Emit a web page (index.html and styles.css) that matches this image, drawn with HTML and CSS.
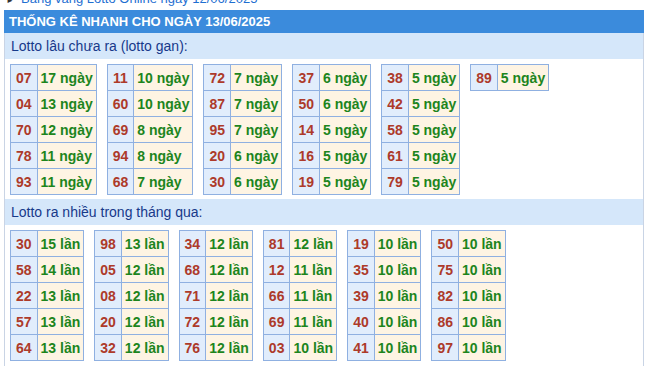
FILE: index.html
```html
<!DOCTYPE html>
<html lang="vi">
<head>
<meta charset="utf-8">
<title>Thống kê nhanh</title>
<link rel="stylesheet" href="styles.css">
</head>
<body>
<div class="crumb"><span class="arrow">&#9658;</span><a class="crumb-link" href="#">Bảng vàng Lotto Online ngày 12/06/2025</a></div>
<div class="box">
  <div class="box-head">THỐNG KÊ NHANH CHO NGÀY 13/06/2025</div>
  <div class="sub">Lotto lâu chưa ra (lotto gan):</div>
  <div class="grid grid-top">
    <table class="lt">
      <tr><td class="num">07</td><td class="val">17 ngày</td></tr>
      <tr><td class="num">04</td><td class="val">13 ngày</td></tr>
      <tr><td class="num">70</td><td class="val">12 ngày</td></tr>
      <tr><td class="num">78</td><td class="val">11 ngày</td></tr>
      <tr><td class="num">93</td><td class="val">11 ngày</td></tr>
    </table>
    <table class="lt">
      <tr><td class="num">11</td><td class="val">10 ngày</td></tr>
      <tr><td class="num">60</td><td class="val">10 ngày</td></tr>
      <tr><td class="num">69</td><td class="val">8 ngày</td></tr>
      <tr><td class="num">94</td><td class="val">8 ngày</td></tr>
      <tr><td class="num">68</td><td class="val">7 ngày</td></tr>
    </table>
    <table class="lt">
      <tr><td class="num">72</td><td class="val">7 ngày</td></tr>
      <tr><td class="num">87</td><td class="val">7 ngày</td></tr>
      <tr><td class="num">95</td><td class="val">7 ngày</td></tr>
      <tr><td class="num">20</td><td class="val">6 ngày</td></tr>
      <tr><td class="num">30</td><td class="val">6 ngày</td></tr>
    </table>
    <table class="lt">
      <tr><td class="num">37</td><td class="val">6 ngày</td></tr>
      <tr><td class="num">50</td><td class="val">6 ngày</td></tr>
      <tr><td class="num">14</td><td class="val">5 ngày</td></tr>
      <tr><td class="num">16</td><td class="val">5 ngày</td></tr>
      <tr><td class="num">19</td><td class="val">5 ngày</td></tr>
    </table>
    <table class="lt">
      <tr><td class="num">38</td><td class="val">5 ngày</td></tr>
      <tr><td class="num">42</td><td class="val">5 ngày</td></tr>
      <tr><td class="num">58</td><td class="val">5 ngày</td></tr>
      <tr><td class="num">61</td><td class="val">5 ngày</td></tr>
      <tr><td class="num">79</td><td class="val">5 ngày</td></tr>
    </table>
    <table class="lt">
      <tr><td class="num">89</td><td class="val">5 ngày</td></tr>
    </table>
  </div>
  <div class="sub">Lotto ra nhiều trong tháng qua:</div>
  <div class="grid grid-bottom">
    <table class="lt">
      <tr><td class="num">30</td><td class="val">15 lần</td></tr>
      <tr><td class="num">58</td><td class="val">14 lần</td></tr>
      <tr><td class="num">22</td><td class="val">13 lần</td></tr>
      <tr><td class="num">57</td><td class="val">13 lần</td></tr>
      <tr><td class="num">64</td><td class="val">13 lần</td></tr>
    </table>
    <table class="lt">
      <tr><td class="num">98</td><td class="val">13 lần</td></tr>
      <tr><td class="num">05</td><td class="val">12 lần</td></tr>
      <tr><td class="num">08</td><td class="val">12 lần</td></tr>
      <tr><td class="num">20</td><td class="val">12 lần</td></tr>
      <tr><td class="num">32</td><td class="val">12 lần</td></tr>
    </table>
    <table class="lt">
      <tr><td class="num">34</td><td class="val">12 lần</td></tr>
      <tr><td class="num">68</td><td class="val">12 lần</td></tr>
      <tr><td class="num">71</td><td class="val">12 lần</td></tr>
      <tr><td class="num">72</td><td class="val">12 lần</td></tr>
      <tr><td class="num">76</td><td class="val">12 lần</td></tr>
    </table>
    <table class="lt">
      <tr><td class="num">81</td><td class="val">12 lần</td></tr>
      <tr><td class="num">12</td><td class="val">11 lần</td></tr>
      <tr><td class="num">66</td><td class="val">11 lần</td></tr>
      <tr><td class="num">69</td><td class="val">11 lần</td></tr>
      <tr><td class="num">03</td><td class="val">10 lần</td></tr>
    </table>
    <table class="lt">
      <tr><td class="num">19</td><td class="val">10 lần</td></tr>
      <tr><td class="num">35</td><td class="val">10 lần</td></tr>
      <tr><td class="num">39</td><td class="val">10 lần</td></tr>
      <tr><td class="num">40</td><td class="val">10 lần</td></tr>
      <tr><td class="num">41</td><td class="val">10 lần</td></tr>
    </table>
    <table class="lt">
      <tr><td class="num">50</td><td class="val">10 lần</td></tr>
      <tr><td class="num">75</td><td class="val">10 lần</td></tr>
      <tr><td class="num">82</td><td class="val">10 lần</td></tr>
      <tr><td class="num">86</td><td class="val">10 lần</td></tr>
      <tr><td class="num">97</td><td class="val">10 lần</td></tr>
    </table>
  </div>
</div>
</body>
</html>
```

FILE: styles.css
```css
html, body {
  margin: 0;
  padding: 0;
  background: #ffffff;
  font-family: "Liberation Sans", Arial, sans-serif;
}

.crumb {
  display: flex;
  align-items: baseline;
  height: 15px;
  line-height: 15px;
  margin-top: -9px;
  margin-bottom: 4px;
  padding-left: 6px;
  font-size: 13px;
}

.arrow {
  width: 15px;
  font-size: 8px;
  color: #333333;
}

.crumb-link {
  color: #1f6fd1;
  text-decoration: none;
}

.box {
  box-sizing: border-box;
  width: 640px;
  margin-left: 4px;
  border-left: 1px solid #c9d4e5;
  border-right: 1px solid #c9d4e5;
}

.box-head {
  margin: 0 -1px;
  height: 23px;
  line-height: 23px;
  padding-left: 5px;
  background: #3b8bdc;
  color: #ffffff;
  font-size: 13px;
  font-weight: bold;
}

.sub {
  height: 26px;
  line-height: 26px;
  padding-left: 6px;
  background: #d5e7fa;
  color: #17398a;
  font-size: 14px;
}

.grid {
  display: flex;
  flex-wrap: wrap;
  align-items: flex-start;
  column-gap: 10px;
  padding: 5px 5px 4px 5px;
}

.grid-bottom {
  padding-bottom: 5px;
}

.lt {
  border-collapse: collapse;
  font-size: 14px;
  font-weight: bold;
}

.lt td {
  height: 25px;
  border: 1px solid #8fb0e1;
  white-space: nowrap;
}

.num {
  padding: 0 5px;
  background: #e1edfc;
  color: #ad3a2a;
  text-align: center;
}

.val {
  padding: 0 3px;
  background: #fef4e3;
  color: #1d851d;
}
```
